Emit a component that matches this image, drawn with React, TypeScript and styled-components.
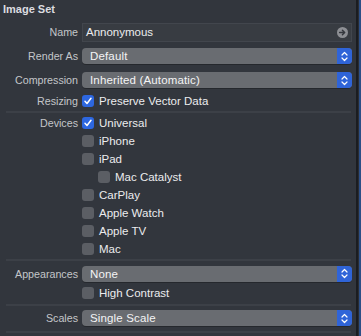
import React, { FC } from 'react';
import styled, { createGlobalStyle } from 'styled-components';

const GlobalStyle = createGlobalStyle`
  html, body {
    margin: 0;
    padding: 0;
    background: #32363d;
  }
  body {
    font-family: "Liberation Sans", Arial, sans-serif;
    -webkit-font-smoothing: antialiased;
  }
`

const FrameStyle = styled.div`
  display: flex;
  width: 361px;
  height: 336px;
  overflow: hidden;
`

const PanelStyle = styled.div`
  width: 356px;
  height: 336px;
  background: #32363d;
  display: flex;
  flex-direction: column;
`

const EdgeStyle = styled.div`
  width: 5px;
  height: 336px;
  display: flex;
  & > div:nth-child(1) { width: 2px; background: #1b1d21; }
  & > div:nth-child(2) { width: 1px; background: #2a2d33; }
  & > div:nth-child(3) { width: 2px; background: #2c4f86; }
`

const TitleStyle = styled.div`
  height: 19px;
  line-height: 18px;
  padding-left: 3px;
  font-size: 11px;
  font-weight: bold;
  color: #dcdde0;
`

const SectionStyle = styled.div<{ $top: number; $bottom: number }>`
  display: flex;
  flex-direction: column;
  padding-top: ${p => p.$top}px;
  padding-bottom: ${p => p.$bottom}px;
`

const RowStyle = styled.div<{ $h: number; $indent?: number }>`
  display: grid;
  grid-template-columns: 78px 1fr;
  column-gap: 4px;
  align-items: center;
  height: ${p => p.$h}px;
  padding-right: 4px;
  & > div:last-child {
    padding-left: ${p => p.$indent || 0}px;
  }
`

const LabelStyle = styled.span`
  text-align: right;
  font-size: 10.7px;
  color: #c4c6ca;
  white-space: nowrap;
`

const SeparatorStyle = styled.div`
  height: 2px;
  margin: 0 5px 0 6px;
  background: #3c4047;
`

const FieldStyle = styled.div`
  height: 19px;
  box-sizing: border-box;
  border: 1px solid #42464d;
  background: #383c42;
  display: flex;
  align-items: center;
  justify-content: space-between;
  padding: 0 3px 0 3px;
  font-size: 11.5px;
  color: #ececee;
`

const PopupStyle = styled.div`
  height: 16px;
  border-radius: 4px;
  background: #696c71;
  display: flex;
  align-items: center;
  overflow: hidden;
  box-shadow: 0 1px 0 rgba(0, 0, 0, 0.25);
  & > span {
    flex: 1;
    padding-left: 8px;
    font-size: 11.5px;
    letter-spacing: 0.15px;
    color: #f4f4f5;
  }
`

const StepperStyle = styled.div`
  width: 15px;
  height: 16px;
  background: #2f64d8;
  display: flex;
  align-items: center;
  justify-content: center;
`

const CheckLineStyle = styled.div`
  display: flex;
  align-items: center;
  gap: 5px;
  font-size: 11.5px;
  color: #ececee;
`

const BoxStyle = styled.div<{ $on?: boolean }>`
  width: 12px;
  height: 12px;
  border-radius: 3px;
  background: ${p => (p.$on ? '#2d67e0' : '#5b5e64')};
  display: flex;
  align-items: center;
  justify-content: center;
`

const GoIcon: FC = () => (
  <svg width="11" height="11" viewBox="0 0 11 11">
    <circle cx="5.5" cy="5.5" r="5.5" fill="#8d8f94" />
    <path d="M2.6 5.5h5M5.4 3.2l2.3 2.3-2.3 2.3" stroke="#34373d" strokeWidth="1.4" fill="none" strokeLinecap="round" strokeLinejoin="round" />
  </svg>
)

const Popup: FC<{ value: string }> = ({ value }) => (
  <PopupStyle>
    <span>{value}</span>
    <StepperStyle>
      <svg width="7" height="11" viewBox="0 0 7 11">
        <path d="M1 4l2.5-2.5L6 4M1 7l2.5 2.5L6 7" stroke="#ffffff" strokeWidth="1.2" fill="none" strokeLinecap="round" strokeLinejoin="round" />
      </svg>
    </StepperStyle>
  </PopupStyle>
)

const Check: FC<{ text: string; on?: boolean }> = ({ text, on }) => (
  <CheckLineStyle>
    <BoxStyle $on={on}>
      {on && (
        <svg width="10" height="10" viewBox="0 0 10 10">
          <path d="M2 5.3l2 2.2L8 2.3" stroke="#ffffff" strokeWidth="1.5" fill="none" strokeLinecap="round" strokeLinejoin="round" />
        </svg>
      )}
    </BoxStyle>
    <span>{text}</span>
  </CheckLineStyle>
)

interface DeviceItem {
  name: string;
  on?: boolean;
  indent?: number;
}

const devices: DeviceItem[] = [
  { name: 'Universal', on: true },
  { name: 'iPhone' },
  { name: 'iPad' },
  { name: 'Mac Catalyst', indent: 16 },
  { name: 'CarPlay' },
  { name: 'Apple Watch' },
  { name: 'Apple TV' },
  { name: 'Mac' },
]

const App: FC = () => {
  return <FrameStyle>
    <GlobalStyle />
    <PanelStyle>
      <TitleStyle>Image Set</TitleStyle>
      <SectionStyle $top={1} $bottom={2}>
        <RowStyle $h={24}>
          <LabelStyle>Name</LabelStyle>
          <div>
            <FieldStyle>
              <span>Annonymous</span>
              <GoIcon />
            </FieldStyle>
          </div>
        </RowStyle>
        <RowStyle $h={24}>
          <LabelStyle>Render As</LabelStyle>
          <div><Popup value="Default" /></div>
        </RowStyle>
        <RowStyle $h={24}>
          <LabelStyle>Compression</LabelStyle>
          <div><Popup value="Inherited (Automatic)" /></div>
        </RowStyle>
        <RowStyle $h={17}>
          <LabelStyle>Resizing</LabelStyle>
          <div><Check text="Preserve Vector Data" on /></div>
        </RowStyle>
      </SectionStyle>
      <SeparatorStyle />
      <SectionStyle $top={1} $bottom={1}>
        {devices.map((d, i) => (
          <RowStyle $h={18} $indent={d.indent} key={d.name}>
            <LabelStyle>{i === 0 ? 'Devices' : ''}</LabelStyle>
            <div><Check text={d.name} on={d.on} /></div>
          </RowStyle>
        ))}
      </SectionStyle>
      <SeparatorStyle />
      <SectionStyle $top={2} $bottom={2}>
        <RowStyle $h={21}>
          <LabelStyle>Appearances</LabelStyle>
          <div><Popup value="None" /></div>
        </RowStyle>
        <RowStyle $h={18}>
          <LabelStyle></LabelStyle>
          <div><Check text="High Contrast" /></div>
        </RowStyle>
      </SectionStyle>
      <SeparatorStyle />
      <SectionStyle $top={2} $bottom={3}>
        <RowStyle $h={20}>
          <LabelStyle>Scales</LabelStyle>
          <div><Popup value="Single Scale" /></div>
        </RowStyle>
      </SectionStyle>
      <SeparatorStyle />
    </PanelStyle>
    <EdgeStyle>
      <div />
      <div />
      <div />
    </EdgeStyle>
  </FrameStyle>
}

export default App
